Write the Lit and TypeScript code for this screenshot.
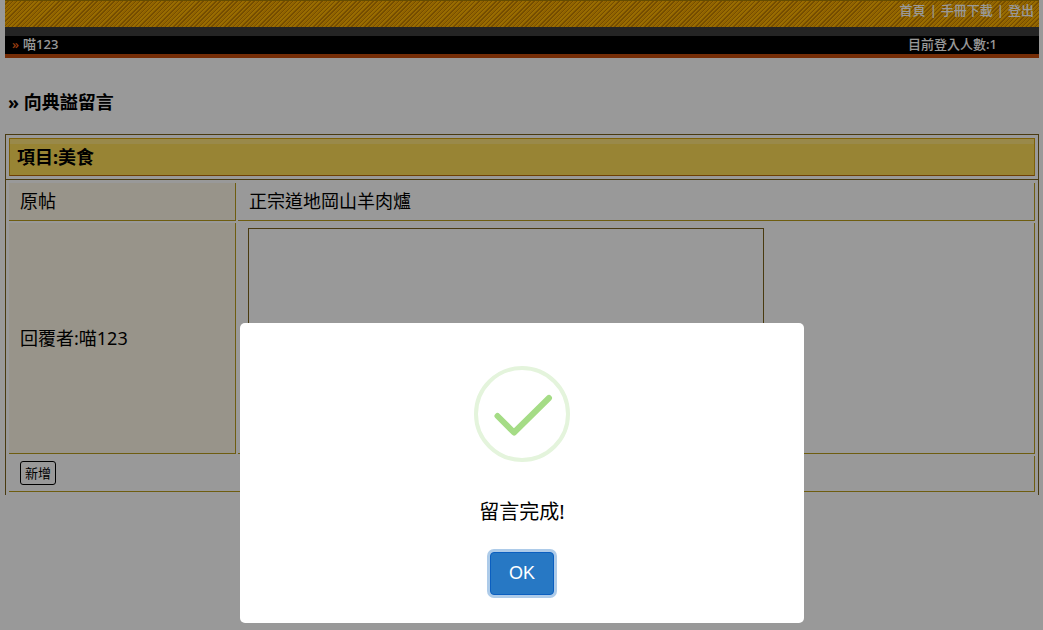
import { LitElement, html, css } from "lit";
import { customElement, state } from "lit/decorators.js";

@customElement("app-root")
export class AppRoot extends LitElement {
  static styles = css`
    :host {
      display: block;
      min-height: 100vh;
      background: #fff;
      color: #000;
      font-family: "Noto Sans", "Noto Sans CJK TC", sans-serif;
      font-size: 18px;
    }
    * { box-sizing: border-box; }
    .page { padding: 0 4px 0 5px; }
    .top {
      height: 27px;
      padding: 0 5px;
      display: flex;
      justify-content: flex-end;
      align-items: flex-start;
      gap: 4px;
      border-top: 1px solid #a87f00;
      background: repeating-linear-gradient(135deg, #ffb600 0 1px, #f0a400 1px 2px, #c48000 2px 3px);
      color: #fff;
      font-size: 13px;
      font-weight: 500;
      line-height: 18px;
    }
    .top a { color: #fff; text-decoration: none; }
    .status {
      display: flex;
      justify-content: space-between;
      height: 31px;
      padding: 8px 42px 0 7px;
      border-bottom: 4px solid #c44c0c;
      background: linear-gradient(#3c3c3c 0 9px, #000 9px);
      color: #fff;
      font-size: 13px;
      font-weight: 500;
      line-height: 18px;
    }
    .user { display: flex; gap: 4px; }
    .mark { color: #ff6a1c; }
    h1 {
      margin: 32px 0 19px;
      padding-left: 3px;
      font-size: 18px;
      line-height: 25px;
    }
    .board {
      border: 1px solid #7b621b;
      border-bottom: 0;
    }
    .banner { padding: 3px; border-bottom: 1px solid #7b621b; }
    h2 {
      margin: 0;
      padding: 0 7px;
      font-size: 18px;
      line-height: 36px;
      border: 1px solid #d2a10c;
      border-bottom-color: #b86a08;
      background: linear-gradient(#ffe47c 0 5px, #fddc58 5px);
    }
    table {
      width: 100%;
      padding: 1px;
      border-spacing: 2px;
      table-layout: fixed;
    }
    .label-col { width: 227px; }
    th, td {
      padding: 0 11px;
      text-align: left;
      font-weight: 400;
      border: solid #b79b1b;
      border-width: 0 1px 1px 0;
      line-height: 37px;
    }
    th { background: #fef7e6; }
    .body-cell { padding: 5px 10px; line-height: 0; }
    textarea {
      width: 516px;
      max-width: 100%;
      height: 220px;
      resize: none;
      border: 1px solid #7b621b;
      outline: 0;
      background: #fff;
      font: inherit;
    }
    .add-cell { line-height: 0; padding: 5px 11px 6px; }
    .add {
      height: 24px;
      padding: 0 4px;
      border: 1px solid #000;
      border-radius: 3px;
      background: transparent;
      color: #000;
      font: inherit;
      font-size: 13px;
      line-height: 22px;
      vertical-align: middle;
    }
    .overlay {
      position: fixed;
      inset: 0;
      display: flex;
      flex-direction: column;
      justify-content: flex-end;
      align-items: center;
      padding: 0 0 7px 1px;
      background: rgba(0, 0, 0, 0.4);
    }
    .modal {
      display: flex;
      flex-direction: column;
      align-items: center;
      width: 564px;
      max-width: 100%;
      padding: 43px 20px 28px;
      border-radius: 5px;
      background: #fff;
    }
    .check { width: 96px; height: 96px; }
    .message {
      margin: 34px 0 24px;
      font-size: 20px;
      line-height: 32px;
    }
    .ok {
      width: 64px;
      height: 43px;
      padding: 0;
      border: 1px solid #0b5fc0;
      border-radius: 4px;
      outline: 0;
      box-shadow: 0 0 0 3px #adcbe9;
      background: #2778c4;
      color: #fff;
      font: 18px "Liberation Sans", sans-serif;
    }
  `;

  @state() private open = true;

  render() {
    return html`
      <div class="page">
        <nav class="top">
          <a href="#">首頁</a><span>|</span><a href="#">手冊下載</a><span>|</span><a href="#">登出</a>
        </nav>
        <div class="status">
          <span class="user"><span class="mark">»</span><span>喵123</span></span>
          <span>目前登入人數:1</span>
        </div>
        <h1>» 向典謚留言</h1>
        <div class="board">
          <div class="banner"><h2>項目:美食</h2></div>
          <table>
            <colgroup><col class="label-col" /><col /></colgroup>
            <tbody>
              <tr><th scope="row">原帖</th><td>正宗道地岡山羊肉爐</td></tr>
              <tr>
                <th scope="row"><label for="reply">回覆者:喵123</label></th>
                <td class="body-cell"><textarea id="reply"></textarea></td>
              </tr>
              <tr><td class="add-cell" colspan="2"><button class="add" type="button">新增</button></td></tr>
            </tbody>
          </table>
        </div>
      </div>
      ${this.open
        ? html`<div class="overlay">
            <div class="modal" role="dialog" aria-modal="true" aria-labelledby="message">
              <svg class="check" viewBox="0 0 96 96" fill="none" aria-hidden="true">
                <circle cx="48" cy="48" r="46" stroke="#e4f4dc" stroke-width="4" />
                <path d="M23.5 50 40 66.500 75 32" stroke="#a5dc86" stroke-width="6" stroke-linecap="round" stroke-linejoin="round" />
              </svg>
              <div class="message" id="message">留言完成!</div>
              <button class="ok" type="button" @click=${() => (this.open = false)}>OK</button>
            </div>
          </div>`
        : null}
    `;
  }
}
